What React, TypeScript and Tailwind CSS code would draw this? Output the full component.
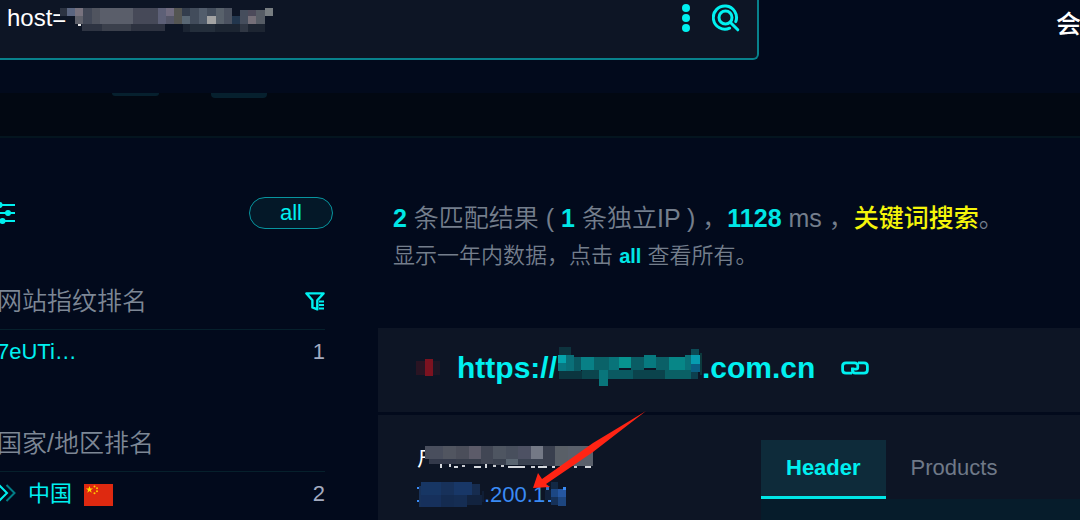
type Cell = [x: number, y: number, w: number, h: number, color: string]

type Rank = {
  title: string
  name: string
  count: number
  filterable?: boolean
  flag?: boolean
}

const hostMask: Cell[] = [
  [5, 3, 7, 8, '#2c3342'],
  [12, 3, 8, 8, '#5a6580'],
  [20, 3, 8, 8, '#77727e'],
  [20, 11, 8, 8, '#5f616b'],
  [28, 3, 9, 16, '#424857'],
  [37, 3, 8, 16, '#50545f'],
  [45, 3, 33, 16, '#5a5e6a'],
  [78, 3, 25, 16, '#464958'],
  [103, 3, 8, 16, '#5d6077'],
  [111, 3, 8, 8, '#716c80'],
  [111, 11, 8, 8, '#545668'],
  [119, 3, 8, 16, '#545552'],
  [127, 3, 8, 8, '#333d4d'],
  [127, 11, 8, 8, '#596774'],
  [135, 3, 9, 16, '#424c5b'],
  [144, 3, 8, 16, '#525d6c'],
  [152, 3, 9, 8, '#434d5c'],
  [152, 11, 9, 8, '#a3a3a3'],
  [161, 3, 8, 16, '#58616b'],
  [169, 3, 8, 16, '#4b5260'],
  [177, 11, 8, 8, '#22364d'],
  [185, 5, 8, 14, '#454d5c'],
  [193, 5, 8, 6, '#4c4a5a'],
  [193, 11, 8, 8, '#756f78'],
  [201, 5, 9, 14, '#565c65'],
  [210, 3, 8, 8, '#777d81'],
  [23, 19, 3, 2, '#e6e6e6'],
  [27, 19, 20, 7, '#2e3442'],
  [47, 19, 29, 7, '#3b404c'],
  [76, 19, 34, 7, '#2d3240'],
  [128, 19, 7, 8, '#1b2432'],
  [135, 19, 25, 8, '#242e3b'],
  [160, 19, 25, 8, '#1c2532'],
  [185, 19, 8, 8, '#303744'],
  [193, 19, 17, 8, '#1d2532'],
]

const domainMask: Cell[] = [
  [2, 0, 12, 8, '#0d333e'],
  [1, 8, 8, 8, '#05a3ac'],
  [1, 16, 8, 8, '#087882'],
  [9, 8, 8, 16, '#0a6f78'],
  [17, 10, 7, 14, '#0a5962'],
  [24, 10, 13, 13, '#088086'],
  [37, 10, 15, 13, '#0a6268'],
  [52, 10, 10, 13, '#087379'],
  [62, 10, 12, 11, '#07938f'],
  [74, 10, 13, 13, '#0a5c64'],
  [87, 8, 12, 13, '#077a80'],
  [99, 10, 13, 13, '#0a6067'],
  [112, 10, 16, 15, '#078687'],
  [128, 8, 6, 15, '#0a7178'],
  [134, 2, 8, 6, '#0c4a56'],
  [134, 8, 9, 9, '#069cb0'],
  [134, 17, 9, 8, '#0a5f83'],
  [2, 24, 23, 8, '#0b353f'],
  [25, 23, 17, 9, '#0b454d'],
  [42, 23, 9, 16, '#09757b'],
  [51, 23, 25, 9, '#0a5961'],
  [76, 23, 32, 9, '#0b434c'],
  [108, 23, 26, 9, '#0a6065'],
  [134, 25, 7, 7, '#0c3f4e'],
  [143, 6, 2, 22, '#0c3a3d'],
]

const titleMask: Cell[] = [
  [8, 0, 18, 13, '#494e5d'],
  [26, 0, 13, 13, '#515560'],
  [39, 0, 13, 13, '#4b4e5a'],
  [52, 0, 12, 13, '#5c5b69'],
  [64, 0, 12, 18, '#414654'],
  [76, 0, 13, 13, '#4e5561'],
  [89, 0, 12, 13, '#484f5d'],
  [101, 0, 13, 13, '#4d5163'],
  [114, 0, 12, 13, '#747986'],
  [126, 0, 12, 20, '#393f4e'],
  [138, 0, 13, 20, '#595f67'],
  [151, 0, 25, 20, '#5a606b'],
  [8, 13, 8, 9, '#0d1525'],
  [12, 13, 27, 5, '#33394a'],
  [39, 13, 25, 5, '#363c4a'],
  [76, 13, 13, 6, '#3b4250'],
  [89, 13, 12, 6, '#5a6571'],
  [101, 13, 25, 6, '#3a4251'],
  // stroke ends showing below the mask
  [16, 18, 8, 4, '#0d1525'],
  [23, 18, 2, 4, '#d5d8dd'],
  [32, 18, 2, 3, '#d5d8dd'],
  [37, 20, 4, 2, '#d5d8dd'],
  [45, 19, 3, 2, '#c9ccd2'],
  [57, 20, 7, 2, '#d5d8dd'],
  [68, 18, 2, 4, '#d5d8dd'],
  [76, 19, 3, 2, '#c9ccd2'],
  [84, 19, 3, 2, '#c9ccd2'],
  [91, 20, 17, 2, '#d5d8dd'],
  [114, 20, 4, 2, '#c9ccd2'],
  [121, 20, 9, 2, '#d5d8dd'],
  [135, 20, 3, 2, '#d5d8dd'],
  [143, 20, 4, 2, '#c9ccd2'],
  [157, 20, 3, 2, '#c9ccd2'],
  [168, 20, 6, 2, '#d5d8dd'],
]

const ipMask: Cell[] = [
  [0, 6, 2, 2, '#3a8bf5'],
  [0, 19, 2, 2, '#3a8bf5'],
  [4, 1, 20, 13, '#173664'],
  [24, 1, 13, 13, '#17315a'],
  [37, 1, 18, 13, '#183767'],
  [55, 3, 8, 11, '#162c4f'],
  [2, 5, 2, 21, '#18325a'],
  [4, 14, 20, 12, '#16305c'],
  [24, 14, 13, 12, '#142b50'],
  [37, 14, 13, 12, '#152d53'],
  [50, 14, 15, 10, '#12233f'],
  [65, 10, 2, 11, '#101e35'],
]

const ipTailMask: Cell[] = [
  [1, 6, 3, 3, '#2f73cf'],
  [3, 19, 3, 2, '#3a8bf5'],
  [0, 9, 6, 10, '#11223c'],
  [6, 1, 7, 7, '#122844'],
  [6, 8, 7, 8, '#1c4784'],
  [13, 8, 8, 8, '#2556a0'],
  [18, 6, 3, 3, '#3a8bf5'],
  [6, 16, 7, 8, '#153159'],
  [13, 16, 8, 9, '#1d4680'],
]

const faviconMask: Cell[] = [
  [0, 2, 9, 14, '#2a1423'],
  [9, 0, 8, 17, '#7c1220'],
  [17, 2, 7, 14, '#1d1625'],
]

const ranks: Rank[] = [
  { title: '网站指纹排名', name: '7eUTi…', count: 1, filterable: true },
  { title: '国家/地区排名', name: '中国', count: 2, flag: true },
]

function Mosaic({ cells, width, height }: { cells: Cell[]; width: number; height: number }) {
  return (
    <svg width={width} height={height} shapeRendering="crispEdges" aria-hidden="true" className="shrink-0">
      {cells.map(([x, y, w, h, color]) => (
        <rect key={`${x}-${y}`} x={x} y={y} width={w} height={h} fill={color} />
      ))}
    </svg>
  )
}

function SearchIcon() {
  return (
    <svg width="28" height="28" viewBox="0 0 28 28" fill="none" stroke="currentColor" strokeWidth="3">
      <path d="M17.6 24.2A11.6 11.6 0 1 1 23.8 17.6" strokeLinecap="round" />
      <circle cx="13.5" cy="13.5" r="6.500" />
      <path d="M18.2 18.2 25.8 25.8" strokeLinecap="round" />
    </svg>
  )
}

function SlidersIcon() {
  return (
    <svg width="18" height="22" viewBox="0 0 18 22" fill="currentColor">
      <path d="M0 2h18v2H0zM0 10h18v2H0zM0 18h18v2H0z" />
      <circle cx="2.5" cy="3" r="3" />
      <circle cx="11" cy="11" r="3" />
      <circle cx="5.5" cy="19" r="3" />
    </svg>
  )
}

function FunnelIcon() {
  return (
    <svg width="20" height="19" viewBox="0 0 20 19" fill="none" stroke="currentColor" strokeWidth="2.4">
      <path d="M1.4 1.4H18.6L12.3 8.2V17.4L7.4 15.4V8.2Z" strokeLinejoin="round" />
      <path d="M14 9.5h5M14 13h5M14 16.5h5" strokeWidth="2" />
    </svg>
  )
}

function LinkIcon() {
  return (
    <svg width="28" height="14" viewBox="0 0 28 14" fill="none" stroke="currentColor" strokeWidth="2.8">
      <path d="M11.5 6.6V8.2H15C16.2 8.2 16.800 7.6 16.800 6.6V5C16.800 3 15.6 1.8 13.6 1.8H5C3 1.8 1.6 3 1.6 5V9C1.6 11 3 12.2 5 12.2H11" />
      <path d="M17 1.8H23C25 1.8 26.4 3 26.4 5V9C26.4 11 25 12.2 23 12.2H14.4C12.4 12.2 11.4 11 11.4 9V7" />
    </svg>
  )
}

function ChevronsIcon() {
  return (
    <svg width="19" height="20" viewBox="0 0 19 20" fill="none" stroke="currentColor" strokeWidth="2">
      <path d="M2 2l8 8-8 8" />
      <path d="M9.5 2l8 8-8 8" opacity="0.5" />
    </svg>
  )
}

function Flag() {
  return (
    <svg width="29" height="22" viewBox="0 0 29 22" aria-label="中国" className="mt-1">
      <rect width="29" height="22" fill="#de2910" />
      <path d="M5.5 2l.9 2.5h2.7L6.9 6.1l.8 2.6-2.2-1.6-2.2 1.6.8-2.6L1.9 4.5h2.7z" fill="#ffde00" />
      <g fill="#ffc800">
        <circle cx="10.5" cy="2.5" r="1" />
        <circle cx="13" cy="4.3" r="1" />
        <circle cx="13" cy="7.2" r="1" />
        <circle cx="10.5" cy="9.2" r="1" />
      </g>
    </svg>
  )
}

function SearchHeader() {
  return (
    <header className="flex h-[93px] shrink-0 items-start">
      <form
        className="relative flex h-[60px] w-[759px] items-start justify-end rounded-br-md border-r-2 border-b-2 border-[#08818c] bg-[#0d1525] pr-[17px]"
        onSubmit={(e) => e.preventDefault()}
      >
        <input
          type="text"
          aria-label="Search query"
          defaultValue="host="
          className="h-9 min-w-0 flex-1 bg-transparent pl-[7px] text-2xl text-white outline-none"
        />
        <div className="pointer-events-none absolute top-[5px] left-[55px]">
          <Mosaic cells={hostMask} width={220} height={30} />
        </div>
        <button type="button" aria-label="More" className="flex h-9 w-7 items-center justify-center">
          <svg width="8" height="28" viewBox="0 0 8 28" fill="currentColor">
            <circle cx="4" cy="4" r="4" />
            <circle cx="4" cy="14" r="4" />
            <circle cx="4" cy="24" r="4" />
          </svg>
        </button>
        <button type="submit" aria-label="Search" className="ml-3 flex h-9 items-center">
          <SearchIcon />
        </button>
      </form>
      <a
        href="#member"
        className="ml-auto w-6 overflow-hidden pt-1 text-[25px] leading-10 font-medium whitespace-nowrap text-white"
      >
        会
      </a>
    </header>
  )
}

function Sidebar() {
  return (
    <aside className="-ml-[3px] w-[381px] shrink-0 pt-[59px] pr-[53px]">
      <div className="-mr-2 flex h-8 items-center justify-between">
        <button type="button" aria-label="Filters">
          <SlidersIcon />
        </button>
        <button
          type="button"
          className="h-8 w-[84px] rounded-full border border-[#08959f] bg-[#041828] text-[22px] leading-7"
        >
          all
        </button>
      </div>
      <div className="pt-[45px]">
        {ranks.map((r) => (
          <section key={r.title} className="h-[142px]">
            <div className="flex h-14 items-center justify-between border-b border-[#06202c]">
              <h2 className="text-[25px] font-[350] text-[#7d8795]">{r.title}</h2>
              {r.filterable && (
                <button type="button" aria-label="Filter">
                  <FunnelIcon />
                </button>
              )}
            </div>
            <div className="flex h-[42px] items-center justify-between text-[22px]">
              <a href="#rank" className="flex items-center gap-3">
                {r.flag && <ChevronsIcon />}
                {r.name}
                {r.flag && <Flag />}
              </a>
              <span className="text-[#a3abc0]">{r.count}</span>
            </div>
          </section>
        ))}
      </div>
    </aside>
  )
}

function Summary() {
  return (
    <div className="pt-[59px] pl-[15px] font-[350] whitespace-nowrap text-[#747e8c]">
      <p className="text-[25px] leading-[42px]">
        <b className="font-bold text-[#00e6e6]">2</b> 条匹配结果 ( <b className="font-bold text-[#00e6e6]">1</b> 条独立IP ) ，
        <b className="font-bold text-[#00e6e6]">1128</b> ms ，<span className="font-medium text-[#f5f50a]">关键词搜索</span>。
      </p>
      <p className="text-[22px] leading-[34px]">
        显示一年内数据，点击{' '}
        <a href="#all" className="text-xl font-bold text-[#00e6e6]">
          all
        </a>{' '}
        查看所有。
      </p>
    </div>
  )
}

function ResultCard() {
  return (
    <article className="relative mt-[55px] flex flex-1 flex-col gap-[3px]">
      <div className="flex h-[84px] items-center bg-[#0d1525] pb-1 pl-[38px]">
        <Mosaic cells={faviconMask} width={24} height={18} />
        <a href="#site" className="ml-[17px] flex items-center text-3xl font-bold">
          https://
          <Mosaic cells={domainMask} width={145} height={42} />
          .com.cn
        </a>
        <a href="#link" aria-label="Link" className="ml-[26px]">
          <LinkIcon />
        </a>
      </div>
      <div className="flex flex-1 bg-[#0d1525]">
        <div className="w-[383px] shrink-0 pt-[31px] pl-[39px]">
          <div className="relative h-[34px] text-[22px] leading-6 text-white">
            户
            <div className="absolute top-0 left-0">
              <Mosaic cells={titleMask} width={177} height={24} />
            </div>
          </div>
          <a href="#ip" className="flex h-7 items-center text-[22px] text-[#3a8bf5]">
            <Mosaic cells={ipMask} width={67} height={27} />
            .200.1
            <Mosaic cells={ipTailMask} width={22} height={26} />
          </a>
        </div>
        <div className="flex flex-1 flex-col pt-[25px]">
          <div role="tablist" className="flex text-[22px]">
            <button
              type="button"
              role="tab"
              aria-selected="true"
              className="h-[59px] border-b-3 border-[#00e6e6] bg-[#0e2b3a] px-[25px] pb-[2px] font-bold"
            >
              Header
            </button>
            <button type="button" role="tab" aria-selected="false" className="px-[25px] pb-1 text-[#6f7988]">
              Products
            </button>
          </div>
          <div className="flex-1 bg-[#061c2b]" />
        </div>
      </div>
      <svg width="114" height="80" viewBox="0 0 114 80" className="absolute top-[83px] left-[155px]" fill="#ff2414">
        <path d="M113 0 60 32 9 68 5 62 0 77 17 76 13 73 60 41Z" />
      </svg>
    </article>
  )
}

export default function App() {
  return (
    <div className="flex h-screen flex-col overflow-hidden bg-[#020a1c] font-['Liberation_Sans','Noto_Sans_CJK_SC',sans-serif] text-[#00f0f0]">
      <SearchHeader />
      <div className="flex h-[45px] shrink-0 items-start border-b-2 border-[#04151f] bg-[#020812] pl-28">
        <span className="h-[3px] w-[47px] rounded-b bg-[#06202e]" />
        <span className="ml-[52px] h-[5px] w-14 rounded-b bg-[#06202e]" />
      </div>
      <div className="flex min-h-0 flex-1">
        <Sidebar />
        <main className="flex min-w-0 flex-1 flex-col">
          <Summary />
          <ResultCard />
        </main>
      </div>
    </div>
  )
}
